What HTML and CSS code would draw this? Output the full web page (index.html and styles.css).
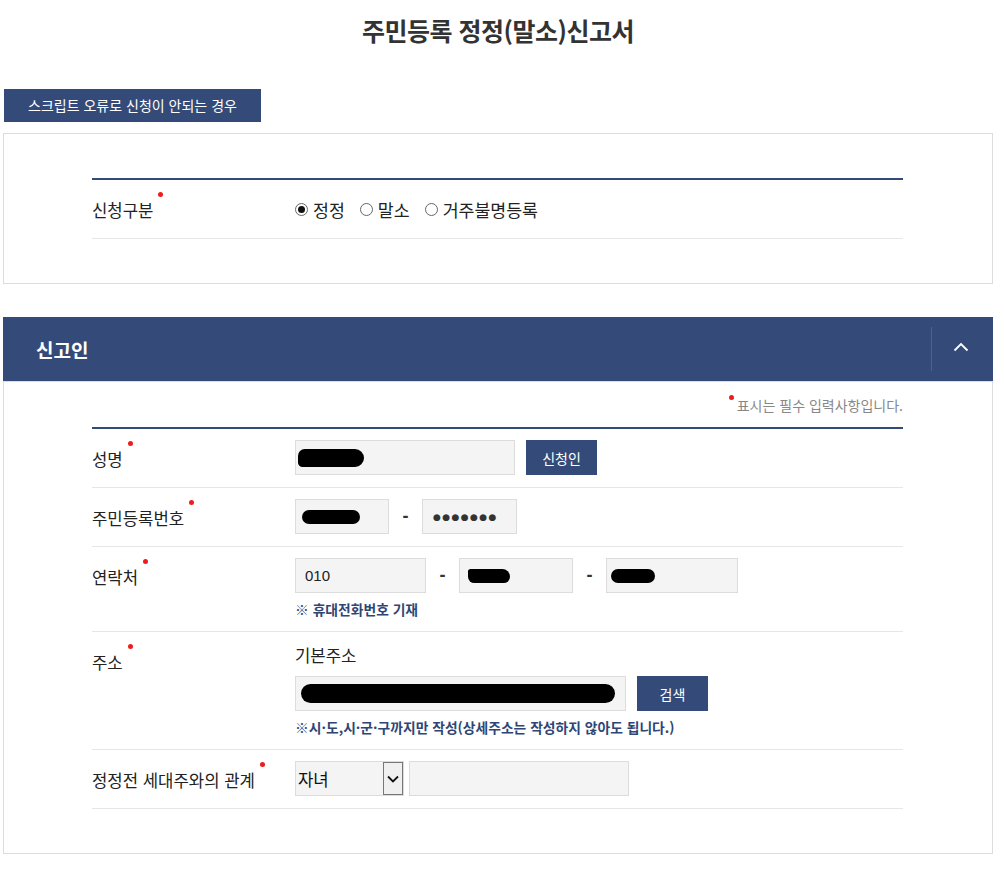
FILE: index.html
```html
<!DOCTYPE html>
<html lang="ko">
<head>
<meta charset="utf-8">
<title>주민등록 정정(말소)신고서</title>
<link rel="stylesheet" href="styles.css">
</head>
<body>
<div class="page">
  <h1 class="title">주민등록 정정(말소)신고서</h1>
  <button class="btn-script" type="button">스크립트 오류로 신청이 안되는 경우</button>

  <div class="box box-type">
    <div class="form-table">
      <div class="row">
        <div class="label"><span class="req">신청구분</span></div>
        <div class="cell radios">
          <label class="radio"><span class="radio-dot checked"></span>정정</label>
          <label class="radio"><span class="radio-dot"></span>말소</label>
          <label class="radio"><span class="radio-dot"></span>거주불명등록</label>
        </div>
      </div>
    </div>
  </div>

  <div class="section-head">
    <h2 class="section-title">신고인</h2>
    <button class="toggle" type="button" aria-label="접기">
      <svg width="16" height="10" viewBox="0 0 16 10"><polyline points="1.5,8.5 8,2 14.5,8.5" fill="none" stroke="#fff" stroke-width="1.8"/></svg>
    </button>
  </div>
  <div class="box box-body">
    <p class="req-note"><span class="dot-inline"></span>표시는 필수 입력사항입니다.</p>
    <div class="form-table">
      <div class="row">
        <div class="label"><span class="req">성명</span></div>
        <div class="cell">
          <div class="line">
            <div class="field w220"><span class="redact r-name"></span></div>
            <button class="btn-navy" type="button">신청인</button>
          </div>
        </div>
      </div>
      <div class="row">
        <div class="label"><span class="req">주민등록번호</span></div>
        <div class="cell">
          <div class="line">
            <div class="field w94"><span class="redact r-rrn"></span></div>
            <span class="dash">-</span>
            <div class="field w95 dots">●●●●●●●</div>
          </div>
        </div>
      </div>
      <div class="row">
        <div class="label"><span class="req">연락처</span></div>
        <div class="cell">
          <div class="line">
            <div class="field w131">010</div>
            <span class="dash">-</span>
            <div class="field w114"><span class="redact r-tel2"></span></div>
            <span class="dash">-</span>
            <div class="field w132"><span class="redact r-tel3"></span></div>
          </div>
          <p class="hint">※ 휴대전화번호 기재</p>
        </div>
      </div>
      <div class="row">
        <div class="label"><span class="req">주소</span></div>
        <div class="cell">
          <p class="sub-label">기본주소</p>
          <div class="line">
            <div class="field w331"><span class="redact r-addr"></span></div>
            <button class="btn-navy" type="button">검색</button>
          </div>
          <p class="hint">※시·도,시·군·구까지만 작성(상세주소는 작성하지 않아도 됩니다.)</p>
        </div>
      </div>
      <div class="row">
        <div class="label"><span class="req">정정전 세대주와의 관계</span></div>
        <div class="cell">
          <div class="line tight">
            <div class="select">
              <span class="select-text">자녀</span>
              <span class="select-arrow">
                <svg width="12" height="8" viewBox="0 0 12 8"><polyline points="1,1.5 6,6.5 11,1.5" fill="none" stroke="#111" stroke-width="1.8"/></svg>
              </span>
            </div>
            <div class="field w220"></div>
          </div>
        </div>
      </div>
    </div>
  </div>
</div>
</body>
</html>
```
FILE: styles.css
```css
* { box-sizing: border-box; }
html, body { margin: 0; padding: 0; background: #fff; }
body {
  font-family: "Malgun Gothic", "Noto Sans CJK KR", "Noto Sans", sans-serif;
  color: #333;
}
.page {
  width: 990px;
  margin-left: 3px;
  padding-bottom: 17px;
}
.title {
  margin: 0;
  padding-top: 13px;
  font-size: 25px;
  line-height: 34px;
  font-weight: 700;
  text-align: center;
  color: #333;
  letter-spacing: -0.5px;
}
.btn-script {
  display: block;
  margin: 42px 0 0 1px;
  width: 257px;
  height: 33px;
  padding: 0;
  border: 0;
  background: #344b79;
  color: #fff;
  font-family: inherit;
  font-size: 14px;
  line-height: 33px;
}
.box {
  border: 1px solid #dcdcdc;
}
.box-type {
  margin-top: 11px;
  padding: 44px 0 44px;
}
.form-table {
  width: 811px;
  margin-left: 88px;
  border-top: 2px solid #344b79;
}
.row {
  display: flex;
  border-bottom: 1px solid #e6e6e6;
  min-height: 59px;
}
.label {
  width: 203px;
  flex: none;
  padding-top: 18px;
  font-size: 16.7px;
  line-height: 24px;
  color: #222;
}
.req {
  position: relative;
}
.req::after {
  content: "";
  position: absolute;
  left: calc(100% + 5px);
  top: -6px;
  width: 5px;
  height: 5px;
  border-radius: 50%;
  background: #ee1c1c;
}
.cell {
  flex: 1;
  padding: 11px 0 12px;
}
.radios {
  display: flex;
  align-items: center;
  padding: 0;
  font-size: 17.3px;
  color: #222;
}
.radio {
  display: flex;
  align-items: center;
  margin-right: 15px;
}
.radio-dot {
  width: 13px;
  height: 13px;
  border: 1px solid #666;
  border-radius: 50%;
  margin-right: 5px;
  display: flex;
  align-items: center;
  justify-content: center;
  background: #fff;
}
.radio-dot.checked::before {
  content: "";
  width: 7px;
  height: 7px;
  border-radius: 50%;
  background: #111;
}
.section-head {
  margin-top: 33px;
  height: 64px;
  background: #344b79;
  display: flex;
  align-items: center;
  justify-content: space-between;
}
.section-title {
  margin: 0 0 0 33px;
  font-size: 19px;
  font-weight: 700;
  color: #fff;
}
.toggle {
  width: 62px;
  height: 44px;
  border: 0;
  border-left: 1px solid #4d6290;
  background: transparent;
  display: flex;
  align-items: center;
  justify-content: center;
  padding: 0 4px 4px 0;
}
.box-body {
  padding: 13px 0 44px;
}
.req-note {
  width: 811px;
  margin: 0 0 12px 88px;
  text-align: right;
  font-size: 14px;
  line-height: 20px;
  color: #888;
}
.dot-inline {
  display: inline-block;
  width: 5px;
  height: 5px;
  border-radius: 50%;
  background: #ee1c1c;
  vertical-align: top;
  margin: 0 3px 0 0;
}
.line {
  display: flex;
  align-items: center;
}
.line.tight { gap: 5px; }
.field {
  height: 35px;
  background: #f4f4f4;
  border: 1px solid #dcdcdc;
  padding: 0 9px;
  display: flex;
  align-items: center;
  font-family: "Liberation Sans", "Noto Sans CJK KR", sans-serif;
  font-size: 15px;
  color: #222;
}
.w94 { width: 94px; }
.w95 { width: 95px; }
.w114 { width: 114px; }
.w131 { width: 131px; }
.w132 { width: 132px; }
.w220 { width: 220px; }
.w331 { width: 331px; }
.dots {
  font-family: "DejaVu Sans", sans-serif;
  font-size: 9px;
  letter-spacing: 1.4px;
  color: #333;
  padding-left: 10px;
}
.dash {
  width: 33px;
  text-align: center;
  font-size: 18px;
  font-weight: 700;
  color: #333;
  font-family: "Liberation Sans", sans-serif;
}
.btn-navy {
  margin-left: 11px;
  width: 71px;
  height: 35px;
  border: 0;
  background: #344b79;
  color: #fff;
  font-family: inherit;
  font-size: 14px;
}
.redact {
  display: block;
  background: #000;
  border-radius: 10px;
}
.r-name { width: 66px; height: 18px; margin-left: -7px; border-radius: 9px 12px 12px 6px; }
.r-rrn { width: 58px; height: 14px; margin-left: -3px; }
.r-tel2 { width: 42px; height: 14px; margin-left: -1px; border-radius: 4px 12px 10px 10px; }
.r-tel3 { width: 44px; height: 14px; margin-left: -5px; }
.r-addr { width: 314px; height: 19px; margin-left: -4px; }
.hint {
  margin: 6px 0 0;
  font-size: 13.8px;
  line-height: 20px;
  font-weight: 700;
  color: #2f4675;
}
.sub-label {
  margin: 0 0 9px;
  font-size: 16.7px;
  line-height: 24px;
  color: #222;
}
.select {
  width: 109px;
  height: 35px;
  background: #f4f4f4;
  border: 1px solid #dcdcdc;
  display: flex;
  align-items: stretch;
}
.select-text {
  flex: 1;
  display: flex;
  align-items: center;
  padding-left: 2px;
  font-size: 16.7px;
  color: #111;
}
.select-arrow {
  width: 20px;
  border: 1px solid #777;
  background: #f0f0f0;
  display: flex;
  align-items: center;
  justify-content: center;
}
```
